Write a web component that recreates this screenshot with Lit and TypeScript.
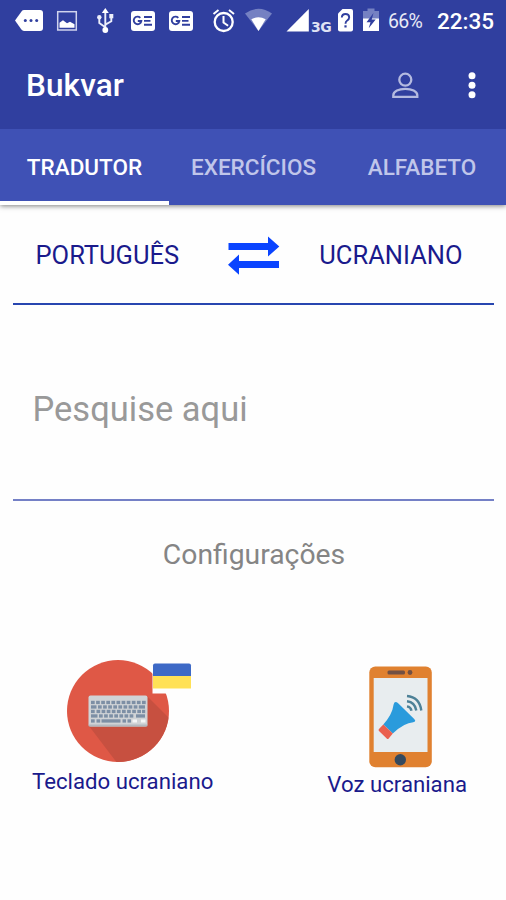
import { LitElement, html, css, svg } from "lit";
import { customElement, property, state } from "lit/decorators.js";
import { classMap } from "lit/directives/class-map.js";

@customElement("status-bar")
class StatusBar extends LitElement {
  static styles = css`
    :host {
      display: flex;
      height: 42px;
      padding-left: 14px;
      color: #fff;
    }
    svg { display: block; flex: none; height: 42px; }
    .chat { width: 30px; }
    .image { width: 22px; margin-left: 12px; }
    .usb { width: 20px; margin-left: 18px; }
    .news { width: 26px; margin-left: 14px; }
    .news + .news { margin-left: 12px; }
    .alarm { width: 24px; margin-left: 18px; }
    .wifi { width: 30px; margin-left: 8px; }
    .signal { width: 24px; margin-left: 12px; }
    .net {
      font: 700 14px/15px "DejaVu Sans", sans-serif;
      width: 20px;
      margin: 20px 6px 0 1px;
      letter-spacing: -0.5px;
      color: #dfe2f4;
    }
    .sim { width: 17px; }
    .battery { width: 18px; margin-left: 8px; }
    .percent {
      font: 400 19.5px/43px Roboto, sans-serif;
      width: 50px;
      margin-left: 8px;
      letter-spacing: -0.7px;
      color: #e8eaf6;
    }
    .clock { font: 500 22.5px/43px Roboto, sans-serif; margin-left: -1px; }
  `;

  private news() {
    return html`<svg class="news" viewBox="0 0 26 42">
      <rect x="1" y="11" width="24" height="20" rx="3" fill="#fff" />
      <path d="M10.3 17.8a3.8 3.8 0 1 0 1 3.2H7.8M14 17h8M14 20.9h6.500M14 24.700h8" fill="none" stroke="#303f9f" stroke-width="1.9" />
    </svg>`;
  }

  render() {
    return html`
      <svg class="chat" viewBox="14 0 30 42">
        <path d="M15 20.600l6.500-9.200q1-1.400 2.600-1.400H40q3 0 3 3v15q0 3-3 3H24q-1.600 0-2.600-1.400z" fill="#fff" />
        <g fill="#303f9f"><circle cx="25.300" cy="20.600" r="1.500" /><circle cx="31" cy="20.600" r="1.500" /><circle cx="36.700" cy="20.600" r="1.500" /></g>
      </svg>
      <svg class="image" viewBox="56 0 22 42">
        <rect x="57.700" y="11.700" width="18.600" height="18.300" fill="none" stroke="#d0d4ee" stroke-width="1.500" />
        <path d="M59.500 27.800v-5l3.500-2.500 4 3 3-1.500 4.500 2.500v3.500z" fill="#fff" />
      </svg>
      <svg class="usb" viewBox="96 0 20 42">
        <path d="M105.300 10v20M105.300 27.300l-6-4.300v-5M105.300 24.600l6-3.300V16" fill="none" stroke="#eceefa" stroke-width="1.900" />
        <path d="M105.300 8l3.500 5h-7z" fill="#fff" />
        <circle cx="105.300" cy="30" r="2.900" fill="#fff" /><circle cx="99.300" cy="17.300" r="2.200" fill="#eceefa" /><rect x="109.300" y="14" width="4" height="4.300" fill="#eceefa" />
      </svg>
      ${this.news()}${this.news()}
      <svg class="alarm" viewBox="212 0 24 42">
        <circle cx="223.700" cy="22" r="9" fill="none" stroke="#fff" stroke-width="2.300" />
        <path d="M223.500 16v6.500l4.600 3.200M213.500 14l5-4M229 10l5 4" fill="none" stroke="#fff" stroke-width="2" />
      </svg>
      <svg class="wifi" viewBox="244 0 30 42">
        <path d="M245 13.500q13.500-9.500 27 0L258.500 31z" fill="#7581c2" />
        <path d="M251.300 19.300q7.200-4 14.400 0L258.500 31z" fill="#fff" />
      </svg>
      <svg class="signal" viewBox="286 0 24 42"><path d="M286.500 31.500L308.800 9v22.500z" fill="#fff" /></svg>
      <span class="net">3G</span>
      <svg class="sim" viewBox="337 0 17 42">
        <path d="M342.500 9h8.500q2 0 2 2v18.500q0 2-2 2h-11q-2 0-2-2V13.500z" fill="#fff" />
        <path d="M341.800 17.500q.2-3.500 3.700-3.500t3.700 3.300q0 2-2 3.200-1.700 1-1.700 3.200" fill="none" stroke="#303f9f" stroke-width="1.900" /><rect x="344.400" y="25.300" width="2.200" height="2.200" fill="#303f9f" />
      </svg>
      <svg class="battery" viewBox="362 0 18 42">
        <path d="M363 11h4.500V8.500h7V11h4.500v20h-16z" fill="#7581c2" />
        <path d="M363 18.500h16V31h-16z" fill="#fff" />
        <path d="M373.500 13l-7 9.200h4l-1.800 6 7-8.700h-4z" fill="#303f9f" />
      </svg>
      <span class="percent">66%</span>
      <span class="clock">22:35</span>
    `;
  }
}

@customElement("tool-bar")
class ToolBar extends LitElement {
  static styles = css`
    :host {
      display: flex;
      align-items: center;
      height: 87px;
      padding: 0 26px 0 26px;
      box-sizing: border-box;
      color: #fff;
    }
    .title { flex: 1; font: 500 31.500px/40px Roboto, sans-serif; letter-spacing: 0.1px; }
    .user { width: 28px; height: 28px; margin-right: 47px; }
    .more { width: 12px; height: 28px; margin-right: 2px; }
  `;
  render() {
    return html`
      <span class="title">Bukvar</span>
      <svg class="user" viewBox="0 0 28 28" fill="none" stroke="#b4bae0" stroke-width="2.300">
        <circle cx="14.300" cy="7.700" r="6" />
        <path d="M2.300 24.800v-1.500C2.300 19 8 16.800 14.300 16.800s12 2.200 12 6.500v1.500z" />
      </svg>
      <svg class="more" viewBox="0 0 12 28" fill="#fff">
        <circle cx="6" cy="3.800" r="3.500" /><circle cx="6" cy="13.300" r="3.500" /><circle cx="6" cy="22.700" r="3.500" />
      </svg>
    `;
  }
}

@customElement("tab-strip")
class TabStrip extends LitElement {
  @property({ type: Array }) tabs: string[] = [];
  @state() private selected = 0;
  static styles = css`
    :host {
      display: grid;
      grid-template-columns: 169px 169px 168px;
      height: 75.500px;
      margin-bottom: 0.500px;
      background: #3f51b5;
      box-shadow: 0 1px 5px rgba(0, 0, 0, 0.5);
    }
    .tab {
      border: 0;
      border-bottom: 4px solid transparent;
      padding: 4px 0 0;
      background: none;
      white-space: nowrap;
      font: 500 22.500px/68px Roboto, sans-serif;
      color: #c0c6ea;
    }
    .active { color: #fff; border-color: #fff; }
  `;
  render() {
    return this.tabs.map(
      (t, i) => html`<button
        class=${classMap({ tab: true, active: i === this.selected })}
        @click=${() => (this.selected = i)}
      >${t}</button>`
    );
  }
}

const keys = (y: number, xs: number[][]) =>
  xs.map(([x, w]) => svg`<rect x=${x} y=${y} width=${w} height="3.300" />`);
const row = (from: number, n: number) =>
  Array.from({ length: n }, (_, i) => [from + i * 5.1, 3.7]);

@customElement("app-root")
class AppRoot extends LitElement {
  static styles = css`
    :host {
      display: flex;
      flex-direction: column;
      height: 900px;
      background: #fefefe;
      font-family: Roboto, sans-serif;
      color: #1a1a8c;
      overflow: hidden;
    }
    .head { position: relative; z-index: 1; background: #303f9f; }
    .languages {
      display: flex;
      justify-content: space-between;
      align-items: center;
      height: 100px;
      box-sizing: border-box;
      margin: 0 12px 0 13px;
      padding: 2px 31.500px 0 22.500px;
      border-bottom: 2px solid #2846b0;
      font-size: 25.500px;
    }
    .swap { width: 52px; height: 40px; margin-left: 9px; }
    .search {
      height: 196px;
      box-sizing: border-box;
      margin: 0 12px 0 13px;
      padding: 14px 19.500px 0;
      border: 0;
      border-bottom: 2px solid #7480c6;
      border-radius: 0;
      outline: 0;
      background: none;
      font: 400 34.500px Roboto, sans-serif;
    }
    .search::placeholder { color: #999; opacity: 1; }
    .heading { margin: 37px 0 0; padding-left: 2px; font-weight: 400; font-size: 28.300px; line-height: 34px; text-align: center; color: #858585; }
    .settings {
      display: flex;
      justify-content: space-between;
      margin: 86px 39px 0 32px;
      font-size: 22.200px;
      line-height: 28px;
    }
    .item { display: flex; flex-direction: column; align-items: center; }
    .keyboard { width: 126px; height: 104px; margin-left: 13px; margin-bottom: 5px; }
    .phone { width: 64px; height: 104px; margin: 7px 0 1px 6px; }
  `;

  private arrows() {
    return html`<svg class="swap" viewBox="228 235 52 40" fill="#0a44ff">
      <path d="M228.500 243H268v-6.500l11.300 10-11.300 10V250h-39.500zM279 261h-40v-6.500l-11 10.300 11 10V268h40z" />
    </svg>`;
  }

  private keyboard() {
    return html`<svg class="keyboard" viewBox="66 658 126 104">
      <defs><clipPath id="disc"><circle cx="118" cy="711" r="51" /></clipPath></defs>
      <circle cx="118" cy="711" r="51" fill="#df5846" />
      <path clip-path="url(#disc)" d="M147 696l40 40v40h-60L89 726z" fill="#c75040" />
      <rect x="88.500" y="695.500" width="59" height="31" rx="2" fill="#d0d3d6" />
      <rect x="88.500" y="724.500" width="59" height="2" rx="1" fill="#b3b9c0" />
      <g fill="#7d8fa5">
        ${keys(700.8, row(91, 11))}
        ${keys(705.3, [[91, 5.5], ...row(98, 8), [138.8, 6.2]])}
        ${keys(709.8, [[91, 3.7], ...row(96.5, 9), [142, 3.2]])}
        ${keys(714.3, [[91, 6.5], ...row(99, 7), [136, 9]])}
        ${keys(719.3, [[91, 3.7], [96.5, 3.7], [101.5, 19], [122.5, 3.5], [127.5, 3.5]])}
      </g>
      <path d="M132.500 719.500h4.500v3h-4.500zM141 719.500h4.500v3H141z" fill="#f4f5f6" />
      <rect x="152.500" y="660" width="41" height="33.500" fill="#fefefe" />
      <path d="M155 663.500h34q2 0 2 2V677h-38v-11.500q0-2 2-2z" fill="#3d69c6" />
      <path d="M153 676h38v12.500h-38z" fill="#ffe156" />
    </svg>`;
  }

  private phone() {
    return html`<svg class="phone" viewBox="368 665 64 104">
      <rect x="369.300" y="666.500" width="62.500" height="100.700" rx="6" fill="#e08130" />
      <rect x="373.700" y="678" width="53.800" height="74" fill="#e8edef" />
      <rect x="387.500" y="670.500" width="17.500" height="4" rx="1.500" fill="#715044" /><circle cx="410" cy="672.500" r="2.400" fill="#715044" />
      <circle cx="400.300" cy="759.700" r="5.700" fill="#34495e" />
      <path d="M393.600 704.500q1-4 4.300-1.500l16.300 16q2.500 2.500-1 3.300-9 .5-20.400 11.200l-9.500-9q9-10 10.300-20z" fill="#2a9bdc" />
      <path d="M383.300 724.500l9.500 9-4.100 5q-1 1-2 0l-7.700-7.400q-1-1 0-2z" fill="#ea604f" />
      <path d="M407 696q12.500 1 14.300 14.500M407 701.200q8 1 9.300 9.300M407 706.400q3.800.6 4.500 4.300" fill="none" stroke="#4d8197" stroke-width="2.400" />
    </svg>`;
  }

  render() {
    return html`
      <div class="head"><status-bar></status-bar><tool-bar></tool-bar></div>
      <tab-strip .tabs=${["TRADUTOR", "EXERCÍCIOS", "ALFABETO"]}></tab-strip>
      <div class="languages"><span>PORTUGUÊS</span>${this.arrows()}<span>UCRANIANO</span></div>
      <input class="search" placeholder="Pesquise aqui" />
      <h2 class="heading">Configurações</h2>
      <div class="settings">
        <div class="item">${this.keyboard()}<span>Teclado ucraniano</span></div>
        <div class="item">${this.phone()}<span>Voz ucraniana</span></div>
      </div>
    `;
  }
}
